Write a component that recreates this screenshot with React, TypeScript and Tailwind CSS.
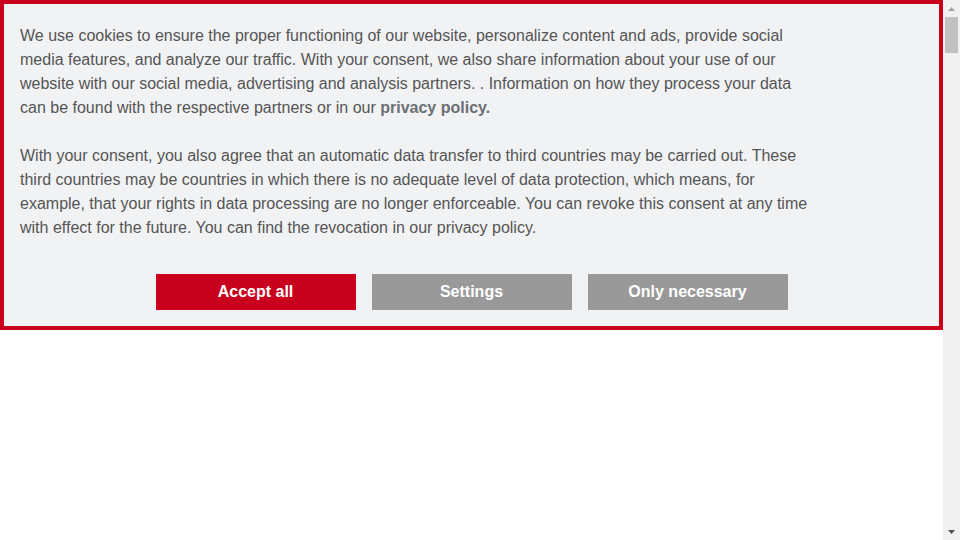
export default function App() {
  return (
    <div className="flex h-[540px] w-[960px] overflow-hidden bg-white font-['Liberation_Sans',Arial,sans-serif]">
      <div className="flex-1">
        <div className="border-4 border-[#c8001e] bg-[#f1f2f4] px-4 pt-5 pb-4">
          <div className="w-[800px] text-base leading-6 text-[#555555]">
            <p>
              We use cookies to ensure the proper functioning of our website, personalize content and ads, provide social
              media features, and analyze our traffic. With your consent, we also share information about your use of our
              website with our social media, advertising and analysis partners. . Information on how they process your data
              can be found with the respective partners or in our <a className="font-bold text-[#6b7074]">privacy policy.</a>
            </p>
            <p className="mt-6">
              With your consent, you also agree that an automatic data transfer to third countries may be carried out. These
              third countries may be countries in which there is no adequate level of data protection, which means, for
              example, that your rights in data processing are no longer enforceable. You can revoke this consent at any time
              with effect for the future. You can find the revocation in our privacy policy.
            </p>
          </div>
          <div className="mt-[34px] flex justify-center gap-4">
            <button className="h-9 w-[200px] bg-[#c8001e] text-base font-bold text-white">Accept all</button>
            <button className="h-9 w-[200px] bg-[#999999] text-base font-bold text-white">Settings</button>
            <button className="h-9 w-[200px] bg-[#999999] text-base font-bold text-white">Only necessary</button>
          </div>
        </div>
      </div>
      <div className="flex w-[17px] flex-col items-center bg-[#f1f1f1]">
        <div className="flex h-[17px] w-full items-center justify-center">
          <svg width="7" height="4" viewBox="0 0 7 4"><path d="M3.5 0L7 4H0z" fill="#a3a3a3" /></svg>
        </div>
        <div className="h-9 w-[13px] bg-[#c1c1c1]" />
        <div className="flex-1" />
        <div className="flex h-[17px] w-full items-center justify-center">
          <svg width="7" height="4" viewBox="0 0 7 4"><path d="M0 0H7L3.5 4z" fill="#505050" /></svg>
        </div>
      </div>
    </div>
  );
}
